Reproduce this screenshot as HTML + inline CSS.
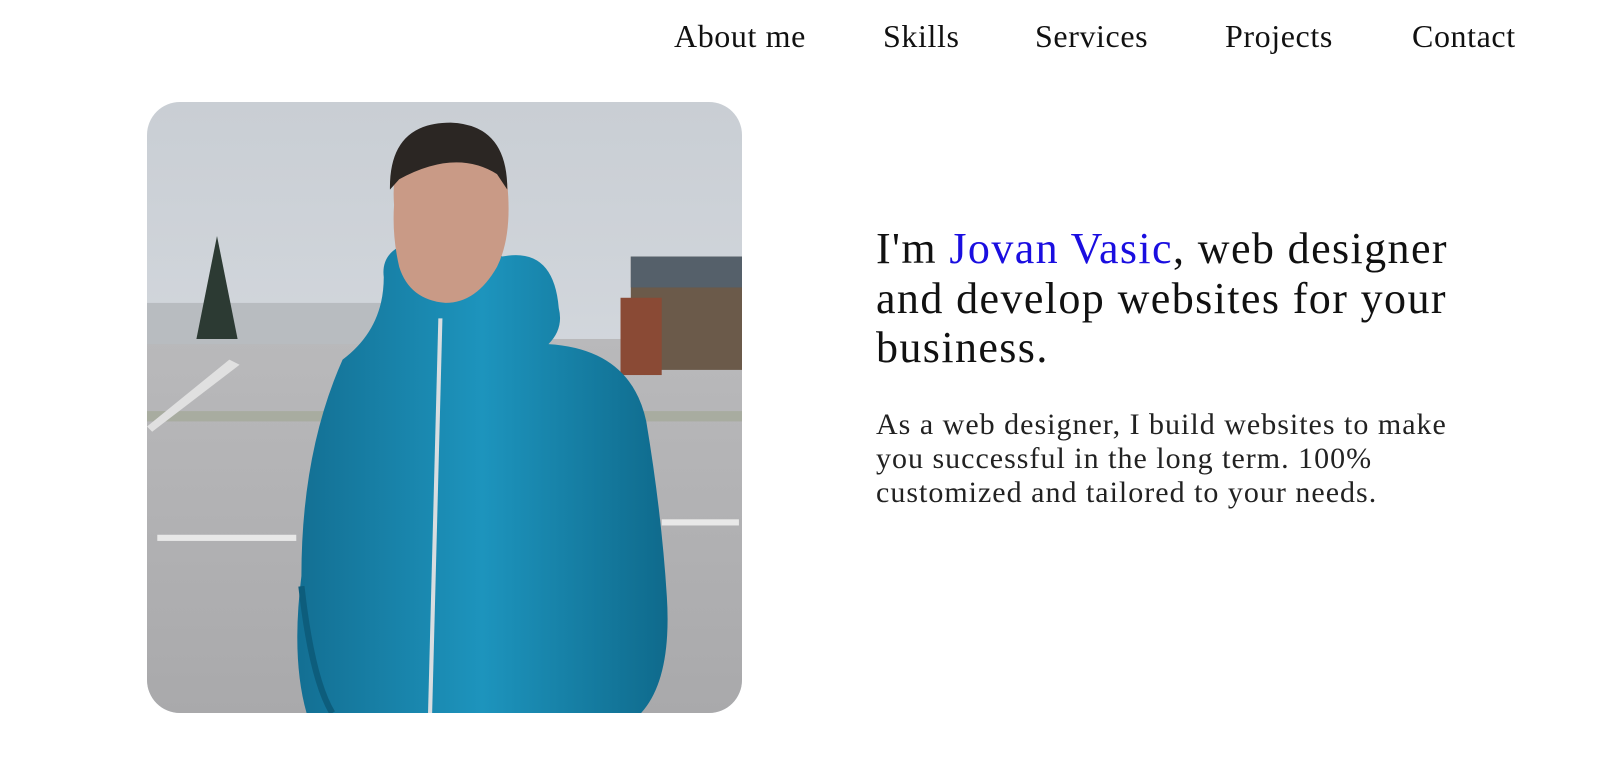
<!DOCTYPE html>
<html><head><meta charset="utf-8">
<style>
html,body{margin:0;padding:0;background:#fff;width:1615px;height:761px;overflow:hidden;font-family:"Liberation Serif",Georgia,serif;color:#111}
nav a{position:absolute;top:18px;font-size:32px;line-height:36px;color:#111;text-decoration:none;letter-spacing:0.6px;white-space:nowrap}
.photo{position:absolute;left:147px;top:102px;width:595px;height:611px;border-radius:33px;overflow:hidden}
h1{position:absolute;left:876px;top:224px;margin:0;font-weight:normal;font-size:44px;line-height:49.5px;letter-spacing:1.4px;white-space:nowrap}
h1 span{color:#1a0ee0}
p{position:absolute;left:876px;top:408px;margin:0;font-size:30px;line-height:34px;letter-spacing:1px;color:#222;white-space:nowrap}
</style></head><body>
<nav>
<a style="left:674px">About me</a>
<a style="left:883px">Skills</a>
<a style="left:1035px">Services</a>
<a style="left:1225px">Projects</a>
<a style="left:1412px">Contact</a>
</nav>
<div class="photo">
<svg width="595" height="611" viewBox="0 0 578 593" preserveAspectRatio="none">
<defs>
<linearGradient id="sky" x1="0" y1="0" x2="0" y2="1"><stop offset="0" stop-color="#c9ced4"/><stop offset="1" stop-color="#dfe3e8"/></linearGradient>
<linearGradient id="road" x1="0" y1="0" x2="0" y2="1"><stop offset="0" stop-color="#b9b9bb"/><stop offset="1" stop-color="#a9a9ab"/></linearGradient>
<linearGradient id="jk" x1="0" y1="0" x2="1" y2="0"><stop offset="0" stop-color="#136f93"/><stop offset="0.5" stop-color="#1d94bd"/><stop offset="1" stop-color="#0f6a8c"/></linearGradient>
</defs>
<rect width="578" height="593" fill="url(#sky)"/>
<rect y="230" width="578" height="363" fill="url(#road)"/>
<rect x="0" y="195" width="240" height="40" fill="#b8bcc0"/>
<polygon points="48,230 68,130 88,230" fill="#2c3a33"/>
<rect x="470" y="150" width="108" height="110" fill="#6b5a4a"/>
<rect x="460" y="190" width="40" height="75" fill="#8a4a35"/>
<rect x="470" y="150" width="108" height="30" fill="#55606a"/>
<rect x="0" y="300" width="578" height="10" fill="#9aa288" opacity="0.5"/>
<rect x="10" y="420" width="135" height="6" fill="#e8e8e8"/>
<rect x="500" y="405" width="75" height="6" fill="#e8e8e8"/>
<path d="M0,315 L80,250 L90,255 L5,320Z" fill="#e0e0e0"/>
<path d="M230,170 Q225,130 300,132 Q330,135 345,150 Q395,140 400,200 Q405,220 390,235 Q470,240 485,310 Q500,400 505,480 Q510,560 480,593 L155,593 Q140,540 150,460 Q150,340 190,250 Q230,220 230,170Z" fill="url(#jk)"/>
<path d="M240,100 Q235,30 290,25 Q345,25 350,80 Q355,130 340,160 Q320,195 290,195 Q255,192 245,160 Q238,130 240,100Z" fill="#c99a86"/>
<path d="M236,85 Q235,20 295,20 Q350,22 350,85 L340,70 Q300,45 245,75Z" fill="#2b2623"/>
<path d="M285,210 L275,593" stroke="#d8dde0" stroke-width="4" fill="none"/>
<path d="M150,470 Q160,560 180,593" stroke="#0d5d7c" stroke-width="6" fill="none"/>
</svg>
</div>
<h1>I'm <span>Jovan Vasic</span>, web designer<br>and develop websites for your<br>business.</h1>
<p>As a web designer, I build websites to make<br>you successful in the long term. 100%<br>customized and tailored to your needs.</p>
</body></html>
